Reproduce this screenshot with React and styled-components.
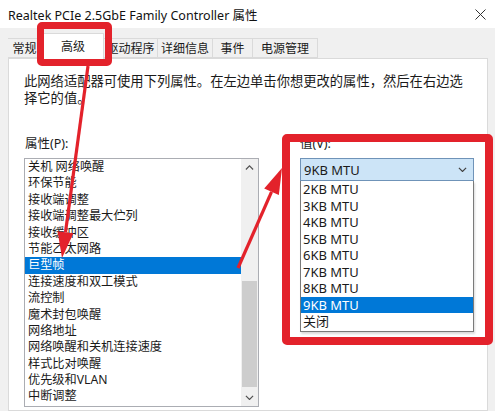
import React from "react";
import styled, { createGlobalStyle } from "styled-components";

const GlobalStyle = createGlobalStyle`
  html, body {
    margin: 0;
    padding: 0;
    background: #ffffff;
  }
  body {
    font-family: "Noto Sans", "Noto Sans CJK SC", sans-serif;
    color: #1a1a1a;
  }
`;

const RED = "#e3222b";

const tabs = [
  { label: "常规", width: 34 },
  { label: "高级", width: 62, active: true },
  { label: "驱动程序", width: 54 },
  { label: "详细信息", width: 55 },
  { label: "事件", width: 40 },
  { label: "电源管理", width: 65 },
];

const properties = [
  "关机 网络唤醒",
  "环保节能",
  "接收端调整",
  "接收端调整最大伫列",
  "接收缓冲区",
  "节能乙太网路",
  "巨型帧",
  "连接速度和双工模式",
  "流控制",
  "魔术封包唤醒",
  "网络地址",
  "网络唤醒和关机连接速度",
  "样式比对唤醒",
  "优先级和VLAN",
  "中断调整",
];

const values = [
  "2KB MTU",
  "3KB MTU",
  "4KB MTU",
  "5KB MTU",
  "6KB MTU",
  "7KB MTU",
  "8KB MTU",
  "9KB MTU",
  "关闭",
];

const Chevron = ({ up, size = 9, color = "#505050" }) => (
  <svg width={size} height={size * 0.6} viewBox="0 0 10 6">
    <polyline
      points={up ? "1,5 5,1 9,5" : "1,1 5,5 9,1"}
      fill="none"
      stroke={color}
      strokeWidth="1.3"
    />
  </svg>
);

const Arrow = ({ x1, y1, x2, y2 }) => {
  const dx = x2 - x1;
  const dy = y2 - y1;
  const len = Math.sqrt(dx * dx + dy * dy);
  const ux = dx / len;
  const uy = dy / len;
  const head = 26;
  const half = 8;
  const bx = x2 - ux * head;
  const by = y2 - uy * head;
  const px = -uy;
  const py = ux;
  return (
    <g>
      <line x1={x1} y1={y1} x2={bx} y2={by} stroke={RED} strokeWidth="3.2" />
      <polygon
        points={`${x2},${y2} ${bx + px * half},${by + py * half} ${bx - px * half},${by - py * half}`}
        fill={RED}
      />
    </g>
  );
};

const App = () => {
  return (
    <>
      <GlobalStyle />
      <Window>
        <TitleBar>
          <Title>Realtek PCIe 2.5GbE Family Controller 属性</Title>
          <CloseButton>
            <svg width="11" height="11" viewBox="0 0 11 11">
              <path d="M0.5 0.5 L10.5 10.5 M10.5 0.5 L0.5 10.5" stroke="#333" strokeWidth="1" />
            </svg>
          </CloseButton>
        </TitleBar>
        <Body>
          <TabStrip>
            {tabs.map((t) => (
              <Tab key={t.label} $width={t.width} $active={t.active}>
                {t.label}
              </Tab>
            ))}
          </TabStrip>
          <Panel>
            <Description>
              此网络适配器可使用下列属性。在左边单击你想更改的属性，然后在右边选
              <br />
              择它的值。
            </Description>
            <Columns>
              <Column>
                <Label>属性(P):</Label>
                <ListBox>
                  <ListItems>
                    {properties.map((p) => (
                      <ListItem key={p} $selected={p === "巨型帧"}>
                        {p}
                      </ListItem>
                    ))}
                  </ListItems>
                  <ScrollBar>
                    <ScrollArrow>
                      <Chevron up />
                    </ScrollArrow>
                    <Track>
                      <Thumb />
                    </Track>
                    <ScrollArrow>
                      <Chevron />
                    </ScrollArrow>
                  </ScrollBar>
                </ListBox>
              </Column>
              <Column>
                <Label>值(V):</Label>
                <ComboWrap>
                  <Combo>
                    <span>9KB MTU</span>
                    <Chevron color="#404040" />
                  </Combo>
                  <DropList>
                    {values.map((v) => (
                      <DropItem key={v} $selected={v === "9KB MTU"}>
                        {v}
                      </DropItem>
                    ))}
                  </DropList>
                </ComboWrap>
              </Column>
            </Columns>
          </Panel>
        </Body>
        <TabHighlight />
        <ValueHighlight />
        <ArrowLayer width="500" height="411" viewBox="0 0 500 411">
          <Arrow x1={88} y1={66} x2={62} y2={258} />
          <Arrow x1={238} y1={268} x2={282} y2={168} />
        </ArrowLayer>
      </Window>
    </>
  );
};

const Window = styled.div`
  position: relative;
  width: 500px;
  height: 411px;
  overflow: hidden;
  background: #ffffff;
  display: flex;
  flex-direction: column;
`;

const TitleBar = styled.div`
  height: 28px;
  flex: none;
  display: flex;
  align-items: center;
  justify-content: space-between;
  padding: 0 14px 0 8px;
  background: #ffffff;
`;

const Title = styled.div`
  font-size: 12.5px;
  color: #111;
`;

const CloseButton = styled.div`
  display: flex;
  align-items: center;
`;

const Body = styled.div`
  flex: 1;
  background: #f0f0f0;
  padding: 0 7px 0 8px;
  margin-right: 5px;
  display: flex;
  flex-direction: column;
  min-height: 0;
`;

const TabStrip = styled.div`
  height: 30px;
  flex: none;
  display: flex;
  align-items: flex-end;
  position: relative;
  z-index: 1;
`;

const Tab = styled.div`
  width: ${(p) => p.$width}px;
  height: ${(p) => (p.$active ? 26 : 20)}px;
  box-sizing: border-box;
  padding-top: ${(p) => (p.$active ? 4 : 1)}px;
  margin-bottom: ${(p) => (p.$active ? -1 : 0)}px;
  text-align: center;
  font-size: 12px;
  line-height: 18px;
  color: #1a1a1a;
  background: ${(p) => (p.$active ? "#ffffff" : "#f0f0f0")};
  border: 1px solid #dadada;
  border-bottom: ${(p) => (p.$active ? "none" : "1px solid #dadada")};
  border-left: ${(p) => (p.$active ? "1px solid #dadada" : "none")};
`;

const Panel = styled.div`
  flex: 1;
  background: #ffffff;
  border: 1px solid #dadada;
  padding: 14px 0 0 15px;
  min-height: 0;
`;

const Description = styled.div`
  font-size: 13.3px;
  line-height: 17px;
  color: #1a1a1a;
  white-space: nowrap;
`;

const Columns = styled.div`
  display: flex;
  gap: 40px;
  margin-top: 29px;
`;

const Column = styled.div`
  display: flex;
  flex-direction: column;
`;

const Label = styled.div`
  font-size: 12.5px;
  line-height: 16px;
  height: 16px;
  margin-bottom: 6px;
  padding-left: 1px;
`;

const ListBox = styled.div`
  width: 235px;
  height: 249px;
  box-sizing: border-box;
  border: 1px solid #abadb3;
  display: flex;
`;

const ListItems = styled.div`
  flex: 1;
`;

const ListItem = styled.div`
  height: 16.4px;
  line-height: 16.4px;
  font-size: 12.2px;
  padding-left: 3px;
  white-space: nowrap;
  color: ${(p) => (p.$selected ? "#ffffff" : "#1a1a1a")};
  background: ${(p) => (p.$selected ? "#0078d7" : "transparent")};
`;

const ScrollBar = styled.div`
  width: 17px;
  background: #f0f0f0;
  display: flex;
  flex-direction: column;
`;

const ScrollArrow = styled.div`
  height: 17px;
  display: flex;
  align-items: center;
  justify-content: center;
`;

const Track = styled.div`
  flex: 1;
  display: flex;
  flex-direction: column;
  justify-content: flex-end;
  padding: 0 1px 2px;
`;

const Thumb = styled.div`
  height: 106px;
  background: #cdcdcd;
`;

const ComboWrap = styled.div`
  position: relative;
  width: 174px;
  margin-left: 1px;
`;

const Combo = styled.div`
  height: 23px;
  box-sizing: border-box;
  border: 1px solid #6f93b8;
  background: #cce4f7;
  display: flex;
  align-items: center;
  justify-content: space-between;
  padding: 0 6px 0 3px;
  font-size: 13px;
  color: #1a1a1a;
`;

const DropList = styled.div`
  position: absolute;
  left: 0;
  right: 0;
  top: 23px;
  box-sizing: border-box;
  border: 1px solid #7a7a7a;
  border-top: none;
  background: #ffffff;
  padding-bottom: 1px;
  box-shadow: 1px 2px 2px rgba(0, 0, 0, 0.15);
`;

const DropItem = styled.div`
  height: 16.5px;
  line-height: 16.5px;
  font-size: 13px;
  padding-left: 2px;
  color: ${(p) => (p.$selected ? "#ffffff" : "#1a1a1a")};
  background: ${(p) => (p.$selected ? "#0078d7" : "transparent")};
`;

const TabHighlight = styled.div`
  position: absolute;
  left: 37px;
  top: 22px;
  width: 75px;
  height: 44px;
  box-sizing: border-box;
  border: 7px solid ${RED};
  border-radius: 5px;
  z-index: 5;
`;

const ValueHighlight = styled.div`
  position: absolute;
  left: 282px;
  top: 134px;
  width: 211px;
  height: 211px;
  box-sizing: border-box;
  border: 8px solid ${RED};
  border-radius: 5px;
  z-index: 5;
`;

const ArrowLayer = styled.svg`
  position: absolute;
  left: 0;
  top: 0;
  pointer-events: none;
  z-index: 6;
`;

export default App;
